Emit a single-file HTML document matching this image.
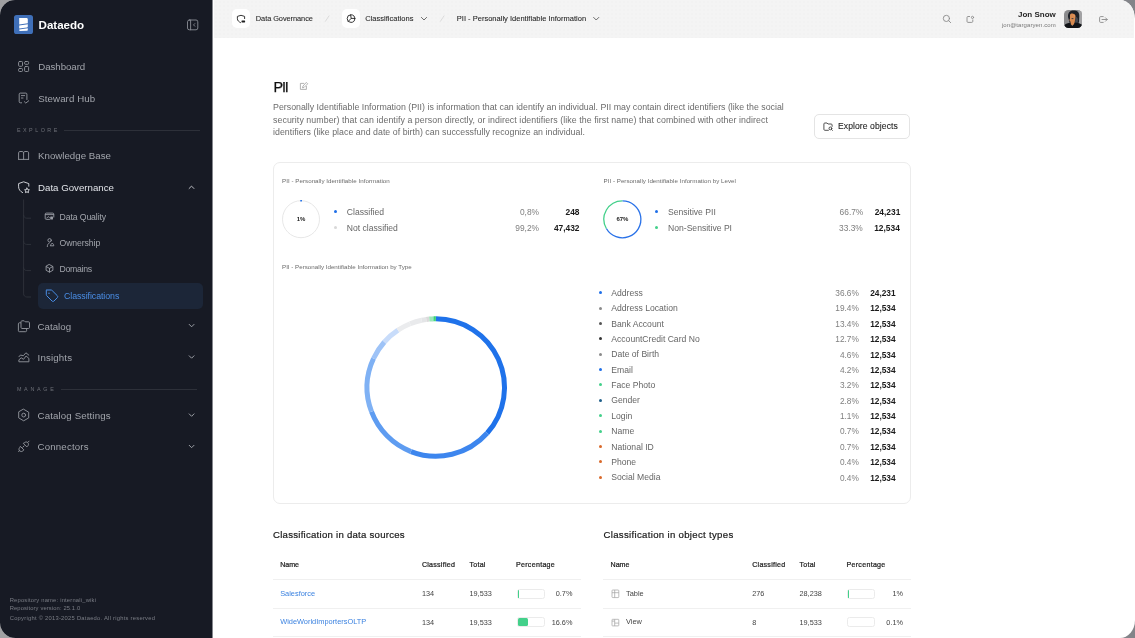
<!DOCTYPE html><html><head><meta charset="utf-8"><style>*{margin:0;padding:0}
html,body{width:1135px;height:638px;overflow:hidden;background:linear-gradient(to right,#a0a0a2,#838489)}
#app{will-change:transform;position:absolute;left:0;top:0;width:1135px;height:638px;border-radius:15px 15px 15px 15.5px / 15px 19px 18px 15.5px;overflow:hidden;background:#fff;font-family:"Liberation Sans",sans-serif}
.t{position:absolute;white-space:nowrap;line-height:1;font-family:"Liberation Sans",sans-serif}
#ic{position:absolute;left:0;top:0;overflow:visible}
</style></head><body><div id="app">
<div style="position:absolute;left:0px;top:0px;width:212px;height:638px;background:#171a24;"></div>
<div style="position:absolute;left:212px;top:0px;width:1px;height:638px;background:#85878d;"></div>
<div style="position:absolute;left:14px;top:15px;width:19px;height:19px;background:#3f6fb8;border-radius:2.6px;"></div>
<div class="t" style="left:38.6px;top:19.38px;font-size:11.6px;color:#ffffff;font-weight:700;letter-spacing:-0.0279px;">Dataedo</div>
<div class="t" style="left:38.2px;top:61.99px;font-size:9.7px;color:#a2a5ac;letter-spacing:-0.0444px;">Dashboard</div>
<div class="t" style="left:38.2px;top:93.69px;font-size:9.7px;color:#a2a5ac;letter-spacing:0.1025px;">Steward Hub</div>
<div class="t" style="left:16.9px;top:127.93px;font-size:5.4px;color:#6d7078;letter-spacing:2.4981px;">EXPLORE</div>
<div style="position:absolute;left:64px;top:130px;width:135.5px;height:0.9px;background:#2d3039;"></div>
<div class="t" style="left:38px;top:151.39px;font-size:9.7px;color:#a2a5ac;letter-spacing:0.0150px;">Knowledge Base</div>
<div class="t" style="left:38px;top:182.79px;font-size:9.7px;color:#e2e4e9;letter-spacing:-0.0021px;">Data Governance</div>
<div class="t" style="left:59.5px;top:212.64px;font-size:8.7px;color:#a2a5ac;letter-spacing:-0.1065px;">Data Quality</div>
<div class="t" style="left:59.5px;top:238.74px;font-size:8.7px;color:#a2a5ac;letter-spacing:-0.0982px;">Ownership</div>
<div class="t" style="left:59.4px;top:265.04px;font-size:8.7px;color:#a2a5ac;letter-spacing:-0.2549px;">Domains</div>
<div style="position:absolute;left:38px;top:283px;width:165.2px;height:25.5px;background:#1c2638;border-radius:5px;"></div>
<div class="t" style="left:64px;top:291.75px;font-size:8.8px;color:#4a8ee6;letter-spacing:-0.0674px;">Classifications</div>
<div class="t" style="left:37.6px;top:321.69px;font-size:9.7px;color:#a2a5ac;letter-spacing:0.0109px;">Catalog</div>
<div class="t" style="left:37.6px;top:353.09px;font-size:9.7px;color:#a2a5ac;letter-spacing:0.1529px;">Insights</div>
<div class="t" style="left:16.9px;top:387.13px;font-size:5.4px;color:#6d7078;letter-spacing:2.7191px;">MANAGE</div>
<div style="position:absolute;left:61px;top:389.4px;width:135.5px;height:0.9px;background:#2d3039;"></div>
<div class="t" style="left:37.6px;top:410.79px;font-size:9.7px;color:#a2a5ac;letter-spacing:0.1214px;">Catalog Settings</div>
<div class="t" style="left:37.6px;top:442.09px;font-size:9.7px;color:#a2a5ac;letter-spacing:0.1550px;">Connectors</div>
<div class="t" style="left:9.7px;top:597.69px;font-size:5.8px;color:#7b7e86;letter-spacing:0.2010px;">Repository name: internali_wiki</div>
<div class="t" style="left:9.7px;top:606.49px;font-size:5.8px;color:#7b7e86;letter-spacing:0.1248px;">Repository version: 25.1.0</div>
<div class="t" style="left:9.7px;top:616.09px;font-size:5.8px;color:#7b7e86;letter-spacing:0.2527px;">Copyright © 2013-2025 Dataedo. All rights reserved</div>
<div style="position:absolute;left:214px;top:0px;width:920px;height:38px;background:#f4f4f4;"></div>
<div style="position:absolute;left:214px;top:0px;width:920px;height:38px;background-image:radial-gradient(circle,#efefef 0.5px,transparent 0.8px);background-size:4px 4px;"></div>
<div style="position:absolute;left:232px;top:9px;width:18px;height:18.6px;background:#fff;border-radius:5px;"></div>
<div class="t" style="left:255.8px;top:14.94px;font-size:7.4px;color:#262626;letter-spacing:-0.0573px;-webkit-text-stroke:0.08px currentColor;">Data Governance</div>
<div style="position:absolute;left:342px;top:9px;width:18.4px;height:19px;background:#fff;border-radius:5px;"></div>
<div class="t" style="left:365.2px;top:14.85px;font-size:7.5px;color:#262626;letter-spacing:0.0190px;-webkit-text-stroke:0.08px currentColor;">Classifications</div>
<div class="t" style="left:456.8px;top:14.85px;font-size:7.5px;color:#262626;letter-spacing:0.0121px;-webkit-text-stroke:0.08px currentColor;">PII - Personally Identifiable Information</div>
<div class="t" style="right:79.20000000000005px;top:10.63px;font-size:8.0px;color:#262626;font-weight:700;">Jon Snow</div>
<div class="t" style="right:79.20000000000005px;top:22.22px;font-size:6px;color:#777;letter-spacing:0.0844px;">jon@targaryen.com</div>
<div style="position:absolute;left:1063.5px;top:9.6px;width:18.8px;height:18.8px;border-radius:4.5px;overflow:hidden;"><svg width="19" height="19" viewBox="0 0 19 19" style="display:block"><rect width="19" height="19" fill="#8b8b8d"/><rect x="14.5" width="4.5" height="19" fill="#a2a2a4"/><path d="M4 7C3.8 3 5.5 0.5 9.5 0.5S15.5 2.5 15.3 6L15 12.5L11 14H6z" fill="#1d2027"/><path d="M11.5 6.5C13 7 14 8 14 10L13.6 13.5 11 14z" fill="#44474f"/><path d="M6 4.8C6.5 3.8 7.6 3.4 8.6 3.6L10.6 4.2C11.5 5 11.7 6 11.4 7.5L10.8 11.5C10.5 13.5 9.8 15 8.8 15.5H7.5C6.8 14.5 6.6 13 6.4 11.6L5.3 10.2 6 8.8z" fill="#d88a50"/><path d="M7.6 8.6h1.8" stroke="#30343c" stroke-width=".9"/><path d="M9.6 5.5l1.2.6" stroke="#f0a070" stroke-width=".8"/><path d="M0 19V15.8C1.2 14 3 13.2 5.5 12.8L8.3 16 11.5 12.6C14.5 12.9 17.6 14 19 15.8V19z" fill="#111317"/></svg></div>
<div class="t" style="left:273.5px;top:80.21px;font-size:14.4px;color:#111;letter-spacing:-1.2031px;-webkit-text-stroke:0.25px currentColor;">PII</div>
<div class="t" style="left:273px;top:103.05px;font-size:8.8px;color:#6b6b6b;letter-spacing:0.0094px;">Personally Identifiable Information (PII) is information that can identify an individual. PII may contain direct identifiers (like the social</div>
<div class="t" style="left:273px;top:115.85px;font-size:8.8px;color:#6b6b6b;letter-spacing:0.0681px;">security number) that can identify a person directly, or indirect identifiers (like the first name) that combined with other indirect</div>
<div class="t" style="left:273px;top:127.95px;font-size:8.8px;color:#6b6b6b;letter-spacing:0.0284px;">identifiers (like place and date of birth) can successfully recognize an individual.</div>
<div style="position:absolute;left:814.3px;top:114.3px;width:96.2px;height:24.3px;background:#fff;border:1px solid #e4e4e4;border-radius:5px;box-sizing:border-box;"></div>
<div class="t" style="left:838px;top:122.22px;font-size:8.6px;color:#222;letter-spacing:0.0715px;-webkit-text-stroke:0.08px currentColor;">Explore objects</div>
<div style="position:absolute;left:272.6px;top:162.4px;width:638px;height:341.2px;border:1px solid #ececec;border-radius:7px;box-sizing:border-box;"></div>
<div class="t" style="left:282px;top:178.35px;font-size:6.2px;color:#6a6a6a;letter-spacing:0.0378px;">PII - Personally Identifiable Information</div>
<div class="t" style="left:603.5px;top:178.35px;font-size:6.2px;color:#6a6a6a;letter-spacing:0.0285px;">PII - Personally Identifiable Information by Level</div>
<div class="t" style="left:282px;top:263.85px;font-size:6.2px;color:#6a6a6a;letter-spacing:0.0039px;">PII - Personally Identifiable Information by Type</div>
<div class="t" style="left:301px;transform:translateX(-50%);top:216.22px;font-size:6px;color:#222;font-weight:700;">1%</div>
<div style="position:absolute;left:334.2px;top:210.3px;width:3px;height:3px;background:#1f6fe8;border-radius:50%;"></div>
<div style="position:absolute;left:334.2px;top:225.8px;width:3px;height:3px;background:#d8d8d8;border-radius:50%;"></div>
<div class="t" style="left:346.8px;top:208.12px;font-size:8.6px;color:#666;">Classified</div>
<div class="t" style="left:346.8px;top:223.62px;font-size:8.6px;color:#666;">Not classified</div>
<div class="t" style="right:596px;top:208.29px;font-size:8.4px;color:#7f7f7f;">0,8%</div>
<div class="t" style="right:596px;top:223.79px;font-size:8.4px;color:#7f7f7f;">99,2%</div>
<div class="t" style="right:555.5px;top:208.29px;font-size:8.4px;color:#1a1a1a;font-weight:700;">248</div>
<div class="t" style="right:555.5px;top:223.79px;font-size:8.4px;color:#1a1a1a;font-weight:700;">47,432</div>
<div class="t" style="left:622.4px;transform:translateX(-50%);top:216.22px;font-size:6px;color:#222;font-weight:700;">67%</div>
<div style="position:absolute;left:655.2px;top:210.3px;width:3px;height:3px;background:#1f6fe8;border-radius:50%;"></div>
<div style="position:absolute;left:655.2px;top:225.8px;width:3px;height:3px;background:#43d08a;border-radius:50%;"></div>
<div class="t" style="left:668px;top:208.12px;font-size:8.6px;color:#666;">Sensitive PII</div>
<div class="t" style="left:668px;top:223.62px;font-size:8.6px;color:#666;">Non-Sensitive PI</div>
<div class="t" style="right:271.70000000000005px;top:208.29px;font-size:8.4px;color:#7f7f7f;">66.7%</div>
<div class="t" style="right:272.20000000000005px;top:223.79px;font-size:8.4px;color:#7f7f7f;">33.3%</div>
<div class="t" style="right:234.70000000000005px;top:208.29px;font-size:8.4px;color:#1a1a1a;font-weight:700;">24,231</div>
<div class="t" style="right:235.20000000000005px;top:223.79px;font-size:8.4px;color:#1a1a1a;font-weight:700;">12,534</div>
<div style="position:absolute;left:598.9px;top:291.20000000000005px;width:3px;height:3px;background:#1f6fe8;border-radius:50%;"></div>
<div class="t" style="left:611.3px;top:288.82px;font-size:8.6px;color:#666;">Address</div>
<div class="t" style="right:276.20000000000005px;top:289.07px;font-size:8.3px;color:#7f7f7f;">36.6%</div>
<div class="t" style="right:239.39999999999998px;top:289.07px;font-size:8.3px;color:#1a1a1a;font-weight:700;">24,231</div>
<div style="position:absolute;left:598.9px;top:306.57500000000005px;width:3px;height:3px;background:#8a8a8a;border-radius:50%;"></div>
<div class="t" style="left:611.3px;top:304.20px;font-size:8.6px;color:#666;">Address Location</div>
<div class="t" style="right:276.20000000000005px;top:304.45px;font-size:8.3px;color:#7f7f7f;">19.4%</div>
<div class="t" style="right:239.39999999999998px;top:304.45px;font-size:8.3px;color:#1a1a1a;font-weight:700;">12,534</div>
<div style="position:absolute;left:598.9px;top:321.95000000000005px;width:3px;height:3px;background:#555;border-radius:50%;"></div>
<div class="t" style="left:611.3px;top:319.57px;font-size:8.6px;color:#666;">Bank Account</div>
<div class="t" style="right:276.20000000000005px;top:319.82px;font-size:8.3px;color:#7f7f7f;">13.4%</div>
<div class="t" style="right:239.39999999999998px;top:319.82px;font-size:8.3px;color:#1a1a1a;font-weight:700;">12,534</div>
<div style="position:absolute;left:598.9px;top:337.32500000000005px;width:3px;height:3px;background:#333;border-radius:50%;"></div>
<div class="t" style="left:611.3px;top:334.95px;font-size:8.6px;color:#666;">AccountCredit Card No</div>
<div class="t" style="right:276.20000000000005px;top:335.20px;font-size:8.3px;color:#7f7f7f;">12.7%</div>
<div class="t" style="right:239.39999999999998px;top:335.20px;font-size:8.3px;color:#1a1a1a;font-weight:700;">12,534</div>
<div style="position:absolute;left:598.9px;top:352.70000000000005px;width:3px;height:3px;background:#8a8a8a;border-radius:50%;"></div>
<div class="t" style="left:611.3px;top:350.32px;font-size:8.6px;color:#666;">Date of Birth</div>
<div class="t" style="right:276.20000000000005px;top:350.57px;font-size:8.3px;color:#7f7f7f;">4.6%</div>
<div class="t" style="right:239.39999999999998px;top:350.57px;font-size:8.3px;color:#1a1a1a;font-weight:700;">12,534</div>
<div style="position:absolute;left:598.9px;top:368.07500000000005px;width:3px;height:3px;background:#1f6fe8;border-radius:50%;"></div>
<div class="t" style="left:611.3px;top:365.70px;font-size:8.6px;color:#666;">Email</div>
<div class="t" style="right:276.20000000000005px;top:365.95px;font-size:8.3px;color:#7f7f7f;">4.2%</div>
<div class="t" style="right:239.39999999999998px;top:365.95px;font-size:8.3px;color:#1a1a1a;font-weight:700;">12,534</div>
<div style="position:absolute;left:598.9px;top:383.45000000000005px;width:3px;height:3px;background:#43d08a;border-radius:50%;"></div>
<div class="t" style="left:611.3px;top:381.07px;font-size:8.6px;color:#666;">Face Photo</div>
<div class="t" style="right:276.20000000000005px;top:381.32px;font-size:8.3px;color:#7f7f7f;">3.2%</div>
<div class="t" style="right:239.39999999999998px;top:381.32px;font-size:8.3px;color:#1a1a1a;font-weight:700;">12,534</div>
<div style="position:absolute;left:598.9px;top:398.82500000000005px;width:3px;height:3px;background:#1f5f8a;border-radius:50%;"></div>
<div class="t" style="left:611.3px;top:396.45px;font-size:8.6px;color:#666;">Gender</div>
<div class="t" style="right:276.20000000000005px;top:396.70px;font-size:8.3px;color:#7f7f7f;">2.8%</div>
<div class="t" style="right:239.39999999999998px;top:396.70px;font-size:8.3px;color:#1a1a1a;font-weight:700;">12,534</div>
<div style="position:absolute;left:598.9px;top:414.20000000000005px;width:3px;height:3px;background:#43d08a;border-radius:50%;"></div>
<div class="t" style="left:611.3px;top:411.82px;font-size:8.6px;color:#666;">Login</div>
<div class="t" style="right:276.20000000000005px;top:412.07px;font-size:8.3px;color:#7f7f7f;">1.1%</div>
<div class="t" style="right:239.39999999999998px;top:412.07px;font-size:8.3px;color:#1a1a1a;font-weight:700;">12,534</div>
<div style="position:absolute;left:598.9px;top:429.57500000000005px;width:3px;height:3px;background:#43d08a;border-radius:50%;"></div>
<div class="t" style="left:611.3px;top:427.20px;font-size:8.6px;color:#666;">Name</div>
<div class="t" style="right:276.20000000000005px;top:427.45px;font-size:8.3px;color:#7f7f7f;">0.7%</div>
<div class="t" style="right:239.39999999999998px;top:427.45px;font-size:8.3px;color:#1a1a1a;font-weight:700;">12,534</div>
<div style="position:absolute;left:598.9px;top:444.95000000000005px;width:3px;height:3px;background:#d9692a;border-radius:50%;"></div>
<div class="t" style="left:611.3px;top:442.57px;font-size:8.6px;color:#666;">National ID</div>
<div class="t" style="right:276.20000000000005px;top:442.82px;font-size:8.3px;color:#7f7f7f;">0.7%</div>
<div class="t" style="right:239.39999999999998px;top:442.82px;font-size:8.3px;color:#1a1a1a;font-weight:700;">12,534</div>
<div style="position:absolute;left:598.9px;top:460.32500000000005px;width:3px;height:3px;background:#d9692a;border-radius:50%;"></div>
<div class="t" style="left:611.3px;top:457.95px;font-size:8.6px;color:#666;">Phone</div>
<div class="t" style="right:276.20000000000005px;top:458.20px;font-size:8.3px;color:#7f7f7f;">0.4%</div>
<div class="t" style="right:239.39999999999998px;top:458.20px;font-size:8.3px;color:#1a1a1a;font-weight:700;">12,534</div>
<div style="position:absolute;left:598.9px;top:475.70000000000005px;width:3px;height:3px;background:#d9692a;border-radius:50%;"></div>
<div class="t" style="left:611.3px;top:473.32px;font-size:8.6px;color:#666;">Social Media</div>
<div class="t" style="right:276.20000000000005px;top:473.57px;font-size:8.3px;color:#7f7f7f;">0.4%</div>
<div class="t" style="right:239.39999999999998px;top:473.57px;font-size:8.3px;color:#1a1a1a;font-weight:700;">12,534</div>
<div class="t" style="left:273px;top:529.87px;font-size:9.6px;color:#1a1a1a;letter-spacing:0.2542px;-webkit-text-stroke:0.2px currentColor;">Classification in data sources</div>
<div class="t" style="left:603.5px;top:529.87px;font-size:9.6px;color:#1a1a1a;letter-spacing:0.3175px;-webkit-text-stroke:0.2px currentColor;">Classification in object types</div>
<div class="t" style="left:280.2px;top:561.59px;font-size:7.1px;color:#1e1e1e;letter-spacing:-0.0466px;-webkit-text-stroke:0.22px currentColor;">Name</div>
<div class="t" style="left:421.9px;top:561.59px;font-size:7.1px;color:#1e1e1e;letter-spacing:0.2468px;-webkit-text-stroke:0.22px currentColor;">Classified</div>
<div class="t" style="left:469.5px;top:561.59px;font-size:7.1px;color:#1e1e1e;letter-spacing:0.2256px;-webkit-text-stroke:0.22px currentColor;">Total</div>
<div class="t" style="left:516px;top:561.59px;font-size:7.1px;color:#1e1e1e;letter-spacing:0.2760px;-webkit-text-stroke:0.22px currentColor;">Percentage</div>
<div class="t" style="left:610.6px;top:561.59px;font-size:7.1px;color:#1e1e1e;letter-spacing:-0.0466px;-webkit-text-stroke:0.22px currentColor;">Name</div>
<div class="t" style="left:752.2px;top:561.59px;font-size:7.1px;color:#1e1e1e;letter-spacing:0.2468px;-webkit-text-stroke:0.22px currentColor;">Classified</div>
<div class="t" style="left:799.5px;top:561.59px;font-size:7.1px;color:#1e1e1e;letter-spacing:0.2256px;-webkit-text-stroke:0.22px currentColor;">Total</div>
<div class="t" style="left:846.5px;top:561.59px;font-size:7.1px;color:#1e1e1e;letter-spacing:0.2760px;-webkit-text-stroke:0.22px currentColor;">Percentage</div>
<div style="position:absolute;left:272.5px;top:579px;width:308px;height:0.9px;background:#f0f0f0;"></div>
<div style="position:absolute;left:272.5px;top:607.6px;width:308px;height:0.9px;background:#f0f0f0;"></div>
<div style="position:absolute;left:272.5px;top:636.4px;width:308px;height:0.9px;background:#f0f0f0;"></div>
<div style="position:absolute;left:603px;top:579px;width:308px;height:0.9px;background:#f0f0f0;"></div>
<div style="position:absolute;left:603px;top:607.6px;width:308px;height:0.9px;background:#f0f0f0;"></div>
<div style="position:absolute;left:603px;top:636.4px;width:308px;height:0.9px;background:#f0f0f0;"></div>
<div class="t" style="left:280.2px;top:589.94px;font-size:7.4px;color:#3b82e0;">Salesforce</div>
<div class="t" style="left:421.9px;top:590.02px;font-size:7.3px;color:#444;">134</div>
<div class="t" style="left:469.5px;top:590.02px;font-size:7.3px;color:#444;">19,533</div>
<div style="position:absolute;left:516.5px;top:588.6px;width:28.5px;height:10px;border:1px solid #ebebeb;border-radius:2.5px;box-sizing:border-box;"></div>
<div style="position:absolute;left:517.5px;top:589.6px;width:1px;height:8px;background:#43d08a;border-radius:1.5px;"></div>
<div class="t" style="right:562.6px;top:590.02px;font-size:7.3px;color:#444;">0.7%</div>
<div class="t" style="left:280.2px;top:618.44px;font-size:7.4px;color:#3b82e0;">WideWorldImportersOLTP</div>
<div class="t" style="left:421.9px;top:618.52px;font-size:7.3px;color:#444;">134</div>
<div class="t" style="left:469.5px;top:618.52px;font-size:7.3px;color:#444;">19,533</div>
<div style="position:absolute;left:516.5px;top:617.1px;width:28.5px;height:10px;border:1px solid #ebebeb;border-radius:2.5px;box-sizing:border-box;"></div>
<div style="position:absolute;left:517.5px;top:618.1px;width:10px;height:8px;background:#43d08a;border-radius:1.5px;"></div>
<div class="t" style="right:562.6px;top:618.52px;font-size:7.3px;color:#444;">16.6%</div>
<div class="t" style="left:626px;top:589.94px;font-size:7.4px;color:#444;">Table</div>
<div class="t" style="left:752.2px;top:590.02px;font-size:7.3px;color:#444;">276</div>
<div class="t" style="left:799.5px;top:590.02px;font-size:7.3px;color:#444;">28,238</div>
<div style="position:absolute;left:846.8px;top:588.6px;width:28.5px;height:10px;border:1px solid #ebebeb;border-radius:2.5px;box-sizing:border-box;"></div>
<div style="position:absolute;left:847.8px;top:589.6px;width:1px;height:8px;background:#43d08a;border-radius:1.5px;"></div>
<div class="t" style="right:232px;top:590.02px;font-size:7.3px;color:#444;">1%</div>
<div class="t" style="left:626px;top:618.44px;font-size:7.4px;color:#444;">View</div>
<div class="t" style="left:752.2px;top:618.52px;font-size:7.3px;color:#444;">8</div>
<div class="t" style="left:799.5px;top:618.52px;font-size:7.3px;color:#444;">19,533</div>
<div style="position:absolute;left:846.8px;top:617.1px;width:28.5px;height:10px;border:1px solid #ebebeb;border-radius:2.5px;box-sizing:border-box;"></div>
<div class="t" style="right:232px;top:618.52px;font-size:7.3px;color:#444;">0.1%</div>
<svg id="ic" width="1135" height="638" viewBox="0 0 1135 638"><g transform="translate(14 15)" fill="#fff"><path d="M5.2 3.1H12.4C13.3 3.1 13.8 3.7 13.8 4.5V8.3L5.2 9.4Z"/><path d="M5.2 10.4L13.8 9.3V11.5C13.8 12.1 13.5 12.4 12.9 12.5L5.2 13.4Z"/><path d="M5.2 14.4L13.8 13.3V14.8C13.8 15.4 13.4 15.8 12.8 15.8L6 16.1C5.5 16.1 5.2 15.8 5.2 15.3Z"/></g><g stroke="#8a8d95" stroke-width="0.9" fill="none" stroke-linecap="round" stroke-linejoin="round"><rect x="187.5" y="20" width="10.3" height="9.8" rx="1.8"/><path d="M190.6 20v9.8"/><path d="M194.8 23.6l-1.3 1.3 1.3 1.3"/></g><g stroke="#8f929a" stroke-width="0.95" fill="none" stroke-linecap="round" stroke-linejoin="round"><rect x="18.6" y="61.5" width="3.9" height="4.8" rx="0.9"/><rect x="24.6" y="61.5" width="4" height="2.8" rx="0.9"/><rect x="18.6" y="68.5" width="3.9" height="3" rx="0.9"/><rect x="24.6" y="66.5" width="4" height="5" rx="0.9"/></g><g stroke="#8f929a" stroke-width="0.95" fill="none" stroke-linecap="round" stroke-linejoin="round"><path d="M21.6 102.8H20.2c-.6 0-1-.4-1-1V94.1c0-.6.4-1 1-1h5.7c.6 0 1 .4 1 1V99.5"/><path d="M21.4 95.6h3.2M21.4 98h1.6"/><path d="M24.4 101.7l1.4 1.4 2.9-2.3"/></g><g stroke="#8f929a" stroke-width="0.95" fill="none" stroke-linecap="round" stroke-linejoin="round"><path d="M18.6 159.4V152.8c0-.8.5-1.3 1.3-1.3h2.3c.8 0 1.4.6 1.4 1.4v6.5"/><path d="M23.6 152.9c0-.8.6-1.4 1.4-1.4h2.3c.8 0 1.3.5 1.3 1.3v6.6"/><path d="M18.6 159.4h10"/></g><g stroke="#d6d8dd" stroke-width="0.95" fill="none" stroke-linecap="round" stroke-linejoin="round"><path d="M22.6 192.6C20.2 191.4 18.6 189.4 18.6 186.8V183.6L23.6 181.8L28.8 183.6V186.2"/><path d="M27 188.1l.75 1.5 1.65.25-1.2 1.15.3 1.65-1.5-.8-1.5.8.3-1.65-1.2-1.15 1.65-.25z"/></g><path d="M189.1 188.5l2.4-2.4 2.4 2.4" stroke="#c5c7cc" stroke-width="0.95" fill="none" stroke-linecap="round" stroke-linejoin="round"/><g stroke="#30333c" stroke-width="0.9" fill="none"><path d="M23.6 199.5V293.8c0 1.8 1.4 3.2 3.2 3.2H31"/><path d="M23.6 215c0 1.8 1.4 3.2 3.2 3.2H31"/><path d="M23.6 241.2c0 1.8 1.4 3.2 3.2 3.2H31"/><path d="M23.6 267.4c0 1.8 1.4 3.2 3.2 3.2H31"/></g><g stroke="#9a9da5" stroke-width="0.9" fill="none" stroke-linecap="round" stroke-linejoin="round"><path d="M49.5 219.4H46.2c-.6 0-1-.4-1-1V214.1c0-.6.4-1 1-1h6.6c.6 0 1 .4 1 1v3"/><path d="M45.4 214.6h8.2"/><path d="M46.6 218.2l1.6-1.6 1.2.9"/></g><rect x="50.2" y="216.4" width="2.8" height="3.2" rx=".6" fill="#9a9da5"/><g stroke="#9a9da5" stroke-width="0.9" fill="none" stroke-linecap="round" stroke-linejoin="round"><circle cx="49.6" cy="240.3" r="1.7"/><path d="M47.3 246.6c0-1.8.7-3 2-3.6"/><path d="M50.6 245.8h3.2l-.3-1.4c-.2-.6-.7-1-1.3-1s-1.1.4-1.3 1z"/></g><g stroke="#9a9da5" stroke-width="0.9" fill="none" stroke-linecap="round" stroke-linejoin="round"><path d="M49.5 264.6l3.4 1.9v3.8l-3.4 1.9-3.4-1.9v-3.8z"/><path d="M46.3 266.6l3.2 1.8 3.2-1.8M49.5 268.4v3.6"/></g><g stroke="#4a8ee6" stroke-width="1" fill="none" stroke-linecap="round" stroke-linejoin="round"><path d="M46.3 290.8v3.9c0 .4.2.8.5 1.1l5.2 5.2c.6.6 1.4.6 2 0l3.3-3.3c.6-.6.6-1.4 0-2l-5.2-5.2c-.3-.3-.7-.5-1.1-.5H46.5z"/></g><circle cx="49" cy="293.3" r="0.7" fill="#4a8ee6"/><g stroke="#8f929a" stroke-width="0.95" fill="none" stroke-linecap="round" stroke-linejoin="round"><path d="M20.6 322.8h-1.2c-.6 0-1 .4-1 1v6.9c0 .6.4 1 1 1h6.2c.6 0 1-.4 1-1v-1.6"/><path d="M21 321.8c0-.6.4-1 1-1h2.2l1 1h3.3c.6 0 1 .4 1 1v4.7c0 .6-.4 1-1 1H22c-.6 0-1-.4-1-1z"/></g><path d="M189.2 324.4l2.4 2.4 2.4-2.4" stroke="#a3a6ad" stroke-width="0.95" fill="none" stroke-linecap="round" stroke-linejoin="round"/><g stroke="#8f929a" stroke-width="0.95" fill="none" stroke-linecap="round" stroke-linejoin="round"><path d="M18.9 356.8l1.6-1.8 2.8.8 2.6-3 2.9 2.3"/><path d="M18.9 361.4v-1.6l2.3-2 2.3 1.5 2.6-3.3 2.8 2.4v3z"/></g><path d="M189.2 355.8l2.4 2.4 2.4-2.4" stroke="#a3a6ad" stroke-width="0.95" fill="none" stroke-linecap="round" stroke-linejoin="round"/><g stroke="#8f929a" stroke-width="0.95" fill="none" stroke-linecap="round" stroke-linejoin="round"><path d="M23.7 409.3l5 2.9v5.7l-5 2.9-5-2.9v-5.7z"/><circle cx="23.7" cy="415.1" r="1.9"/></g><path d="M189.2 413.9l2.4 2.4 2.4-2.4" stroke="#a3a6ad" stroke-width="0.95" fill="none" stroke-linecap="round" stroke-linejoin="round"/><g stroke="#8f929a" stroke-width="0.95" fill="none" stroke-linecap="round" stroke-linejoin="round"><path d="M18.6 451.6l1.2-1.2"/><path d="M20.6 446.6l3.3 3.3-1 1c-.9.9-2.4.9-3.3 0s-.9-2.4 0-3.3z"/><path d="M22.8 447.2l1.2-1.2"/><path d="M23.5 443.6l3.3 3.3 1-1c.9-.9.9-2.4 0-3.3s-2.4-.9-3.3 0z"/><path d="M28.1 442.1l1-1"/></g><path d="M189.2 445.3l2.4 2.4 2.4-2.4" stroke="#a3a6ad" stroke-width="0.95" fill="none" stroke-linecap="round" stroke-linejoin="round"/><g stroke="#2b2b2b" stroke-width="0.95" fill="none" stroke-linecap="round" stroke-linejoin="round"><path d="M240.5 22.6C238.8 21.8 237.4 20.5 237.4 18.8V16.4L241 15.3L244.6 16.4V18.6"/></g><path d="M242 20.4h2.6c.3 0 .5.2.5.5v1.2c0 .3-.2.5-.5.5H242c-.3 0-.5-.2-.5-.5v-1.2c0-.3.2-.5.5-.5z" fill="#1f1f1f"/><path d="M325.2 21.6L329.2 15.6" stroke="#d4d4d4" stroke-width="0.8"/><g stroke="#2b2b2b" stroke-width="0.95" fill="none" stroke-linecap="round" stroke-linejoin="round"><circle cx="351" cy="18.6" r="3.8"/><path d="M348.3 21.3L351.2 18.4L354.7 18.4"/><path d="M351.2 18.4L350.6 14.9"/></g><path d="M421.4 17.4l2.6 2.6 2.6-2.6" stroke="#555" stroke-width="0.85" fill="none" stroke-linecap="round" stroke-linejoin="round"/><path d="M440.2 21.6L444.2 15.6" stroke="#d4d4d4" stroke-width="0.8"/><path d="M593.6 17.4l2.6 2.6 2.6-2.6" stroke="#555" stroke-width="0.85" fill="none" stroke-linecap="round" stroke-linejoin="round"/><g stroke="#8a8a8a" stroke-width="0.9" fill="none" stroke-linecap="round" stroke-linejoin="round"><circle cx="946.4" cy="18.4" r="3.1"/><path d="M948.7 20.7l2 2"/></g><g stroke="#8a8a8a" stroke-width="0.9" fill="none" stroke-linecap="round" stroke-linejoin="round"><path d="M969.6 16.5h-1.6c-.6 0-1 .4-1 1v3.9c0 .6.4 1 1 1h3.8c.6 0 1-.4 1-1v-1.5"/><circle cx="972.5" cy="17.4" r="1.1"/></g><g stroke="#8a8a8a" stroke-width="0.9" fill="none" stroke-linecap="round" stroke-linejoin="round"><path d="M1103.2 16.6h-2.6c-.6 0-1 .4-1 1v3.8c0 .6.4 1 1 1h2.6"/><path d="M1102 19.5h5.2M1105.5 17.8l1.7 1.7-1.7 1.7"/></g><g stroke="#9f9f9f" stroke-width="0.8" fill="none" stroke-linecap="round" stroke-linejoin="round"><path d="M303.8 83.4h-3.4v6h6v-3"/><path d="M306.6 82.7l1.1 1.1-3.7 3.7-1.5.4.4-1.5z"/></g><g stroke="#333" stroke-width="0.85" fill="none" stroke-linecap="round" stroke-linejoin="round"><path d="M828.4 130.3h-3.6c-.5 0-.9-.4-.9-.9v-5.5c0-.5.4-.9.9-.9h2.2l1 1h3.2c.5 0 .9.4.9.9v1.5"/><circle cx="830.4" cy="128.4" r="1.4"/><path d="M831.4 129.4l1 1"/></g><circle cx="301" cy="219.2" r="18.5" stroke="#e4e4e4" stroke-width="0.9" fill="none"/><path d="M300.303 200.713A18.5 18.5 0 0 1 301.930 200.723" stroke="#1f6fe8" stroke-width="1.4" fill="none"/><path d="M622.400 200.800A18.5 18.5 0 1 1 606.359 228.516" stroke="#2a72e8" stroke-width="1.3" fill="none"/><path d="M606.359 228.516A18.5 18.5 0 0 1 622.400 200.800" stroke="#43d08a" stroke-width="1.3" fill="none"/><path d="M435.800 318.800A68.7 68.7 0 0 1 487.256 433.019" stroke="#1f72ea" stroke-width="5" fill="none"/><path d="M487.256 433.019A68.7 68.7 0 0 1 410.959 451.552" stroke="#3d86ee" stroke-width="5" fill="none"/><path d="M410.959 451.552A68.7 68.7 0 0 1 371.518 411.737" stroke="#5e9cf1" stroke-width="5" fill="none"/><path d="M371.518 411.737A68.7 68.7 0 0 1 373.521 358.499" stroke="#7fb1f4" stroke-width="5" fill="none"/><path d="M373.521 358.499A68.7 68.7 0 0 1 384.344 341.981" stroke="#9ec3f7" stroke-width="5" fill="none"/><path d="M384.344 341.981A68.7 68.7 0 0 1 397.969 330.155" stroke="#c8dcfa" stroke-width="5" fill="none"/><path d="M397.969 330.155A68.7 68.7 0 0 1 410.158 323.765" stroke="#ebecee" stroke-width="5" fill="none"/><path d="M410.158 323.765A68.7 68.7 0 0 1 421.685 320.266" stroke="#e9eaec" stroke-width="5" fill="none"/><path d="M421.685 320.266A68.7 68.7 0 0 1 426.353 319.453" stroke="#e4e5e7" stroke-width="5" fill="none"/><path d="M426.353 319.453A68.7 68.7 0 0 1 429.348 319.104" stroke="#dadada" stroke-width="5" fill="none"/><path d="M429.348 319.104A68.7 68.7 0 0 1 432.355 318.886" stroke="#9be6b8" stroke-width="5" fill="none"/><path d="M432.355 318.886A68.7 68.7 0 0 1 434.077 318.822" stroke="#7ddfa5" stroke-width="5" fill="none"/><path d="M434.077 318.822A68.7 68.7 0 0 1 435.800 318.800" stroke="#2fd36c" stroke-width="5" fill="none"/><g stroke="#a6a6a6" stroke-width="0.75" fill="none"><rect x="612" y="590" width="6.8" height="7.6" rx="0.8"/><path d="M612 592.7h6.8M614.7 590v7.6"/></g><g stroke="#a6a6a6" stroke-width="0.75" fill="none"><rect x="612" y="619.3" width="6.8" height="6.6" rx="0.6"/><path d="M614.7 619.3v6.6M612 621.1h2.7M614.7 623.1h4.1"/></g></svg>
</div></body></html>
